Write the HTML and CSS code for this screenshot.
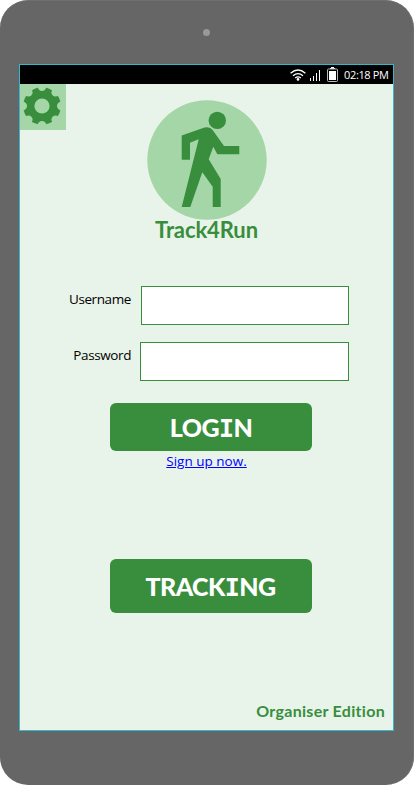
FILE: index.html
```html
<!DOCTYPE html>
<html lang="en">
<head>
<meta charset="utf-8">
<title>Track4Run</title>
<link rel="stylesheet" href="styles.css">
</head>
<body>
<div class="phone">
  <div class="camera"></div>
  <main class="screen">
    <header class="status">
      <svg class="wifi" width="16" height="12" viewBox="0 0 16 12" fill="none" stroke="#fff" stroke-width="1.3">
        <path d="M.6 4.2Q8-2.2 15.4 4.2M3 6.8Q8 2.4 13 6.8M5.2 9Q8 6.7 10.8 9"/>
        <circle cx="8" cy="10.4" r="1.3" fill="#fff" stroke="none"/>
      </svg>
      <svg class="signal" width="11" height="12" viewBox="0 0 11 12" fill="#fff">
        <path d="M0 9h1v3H0zM3 7h1v5H3zM6 4h1v8H6zM9 1h1v11H9z"/>
      </svg>
      <svg class="battery" width="11" height="15" viewBox="0 0 11 15">
        <path d="M4 0h3v1h1v1H3V1h1z" fill="#fff"/>
        <rect x=".5" y="2" width="10" height="12.5" rx="1" fill="none" stroke="#bbb"/>
        <path d="M2 4h7v9H2z" fill="#fff"/>
      </svg>
      <span class="time">02:18 PM</span>
    </header>
    <div class="content">
      <button class="settings" aria-label="Settings">
        <svg width="46" height="46" viewBox="0 0 46 46">
          <circle cx="22" cy="22" r="18.8" fill="#388e3c"/>
          <g fill="#a5d6a7">
            <circle cx="22" cy="22" r="7.6"/>
            <circle cx="22" cy="2.8" r="4.2"/>
            <circle cx="35.6" cy="8.4" r="4.2"/>
            <circle cx="41.2" cy="22" r="4.2"/>
            <circle cx="35.6" cy="35.6" r="4.2"/>
            <circle cx="22" cy="41.2" r="4.2"/>
            <circle cx="8.4" cy="35.6" r="4.2"/>
            <circle cx="2.8" cy="22" r="4.2"/>
            <circle cx="8.4" cy="8.4" r="4.2"/>
          </g>
        </svg>
      </button>
      <svg class="logo" width="120" height="120" viewBox="0 0 120 120">
        <circle cx="60" cy="60" r="59.7" fill="#a5d6a7"/>
        <g fill="#388e3c">
          <circle cx="70.3" cy="20.4" r="8.7"/>
          <path d="M34.7 35.5L57.5 27.6Q62.8 26 65.8 30.2L77 46H92.3V54.3H70.3L66.3 46.7L61.7 59.3L73.7 79V107H65.7V86.7L55.3 72.3L43.3 107H34.7L51.7 39.3L43 42.7V59.7H34.7Z"/>
        </g>
      </svg>
      <h1 class="title">Track4Run</h1>
      <form class="form">
        <label class="field"><span class="label">Username</span><input class="input" type="text"></label>
        <label class="field field-password"><span class="label">Password</span><input class="input" type="password"></label>
        <button class="button login" type="button">LOG<span class="serif-i">I</span>N</button>
      </form>
      <a class="signup" href="#">Sign up now.</a>
      <button class="button tracking" type="button">TRACK<span class="serif-i">I</span>NG</button>
      <footer class="edition">Organiser Edition</footer>
    </div>
  </main>
</div>
</body>
</html>
```
FILE: styles.css
```css
* { box-sizing: border-box; }
body { margin: 0; background: #fff; font-family: "Open Sans", sans-serif; }
button { border: 0; padding: 0; }
svg { display: block; }
.phone {
  width: 414px;
  height: 785px;
  padding: 28px 20px 54px 19px;
  border: 1px solid #707070;
  border-width: 1px 1px 0 0;
  border-radius: 28px;
  background: #666;
  display: flex;
  flex-direction: column;
}
.camera { width: 7px; height: 7px; margin: 0 0 28px 184px; border-radius: 50%; background: #999; }
.screen {
  width: 375px;
  height: 667px;
  border: 1px solid #35b9ca;
  background: #e8f4e9;
  display: flex;
  flex-direction: column;
}
.status {
  height: 19px;
  flex: none;
  padding-right: 4px;
  background: #000;
  color: #fff;
  display: flex;
  align-items: center;
  justify-content: flex-end;
}
.wifi { margin-right: 4px; }
.signal { margin-right: 6px; }
.battery { margin-right: 6px; }
.time { width: 45px; font-size: 11px; letter-spacing: -0.35px; line-height: 19px; white-space: nowrap; }
.content { flex: 1; display: flex; flex-direction: column; align-items: center; }
.settings { width: 46px; height: 46px; margin-bottom: -30px; align-self: flex-start; background: #a5d6a7; }
.logo { flex: none; }
.title {
  margin: -4px 0 0;
  font: 700 22px/28px Lato, sans-serif;
  letter-spacing: -0.1px;
  color: #388e3c;
}
.form { width: 100%; margin-top: 42px; display: flex; flex-direction: column; }
.field { display: flex; height: 39px; margin: 0 44px 17px 40px; }
.label { width: 71px; margin-right: 10px; font-size: 13.5px; letter-spacing: -0.4px; line-height: 27px; text-align: right; white-space: nowrap; }
.input { flex: 1; min-width: 0; height: 39px; border: 1px solid #388e3c; background: #fff; }
.field-password .label { margin-right: 9px; }
.button {
  width: 202px;
  border-radius: 6px;
  background: #388e3c;
  color: #fff;
  font: 900 25px/1 Lato, sans-serif;
  letter-spacing: -0.6px;
}
.serif-i { font-family: "DejaVu Sans Mono", monospace; font-weight: 700; }
.login { height: 48px; margin: 5px 0 0 90px; padding-top: 2px; }
.signup { margin-top: 1px; font-size: 13.5px; line-height: 19px; color: #00f; }
.tracking { height: 54px; margin: 88px 0 0 8px; padding-top: 2px; }
.edition {
  margin: 88px 8px 0 0;
  align-self: flex-end;
  font: 700 16px/20px Lato, sans-serif;
  letter-spacing: 0.3px;
  font-variant-ligatures: none;
  color: #388e3c;
}
```
